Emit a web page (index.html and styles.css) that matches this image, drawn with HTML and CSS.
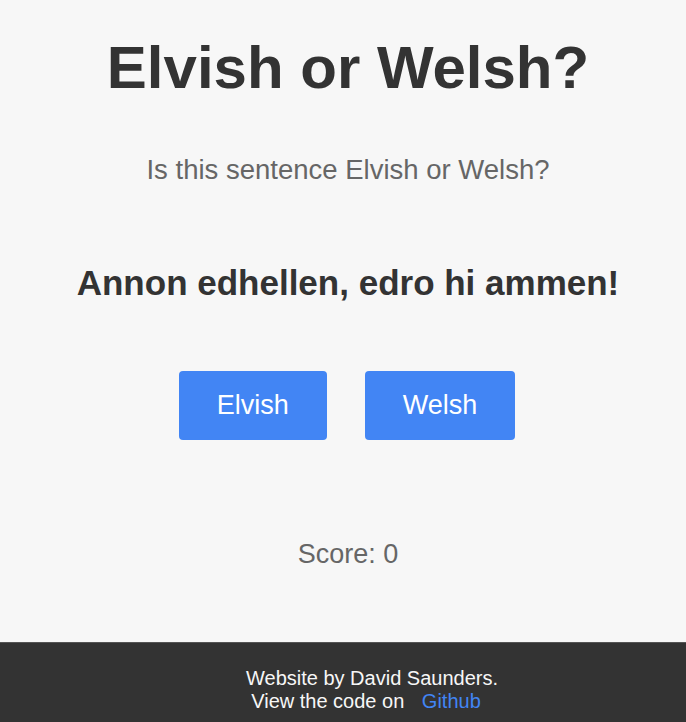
FILE: index.html
```html
<!DOCTYPE html>
<html lang="en">
<head>
<meta charset="utf-8">
<title>Elvish or Welsh?</title>
<link rel="stylesheet" href="styles.css">
</head>
<body>
<main class="game">
  <h1 class="title">Elvish or Welsh?</h1>
  <p class="question">Is this sentence Elvish or Welsh?</p>
  <p class="sentence">Annon edhellen, edro hi ammen!</p>
  <div class="choices">
    <button class="choice">Elvish</button>
    <button class="choice">Welsh</button>
  </div>
  <p class="score">Score: 0</p>
</main>
<footer class="footer">
  <div class="footer-text">Website by David Saunders.<br>View the code on <a class="footer-link" href="#">Github</a></div>
</footer>
</body>
</html>
```
FILE: styles.css
```css
html, body {
  margin: 0;
  padding: 0;
}
body {
  min-height: 100vh;
  display: flex;
  flex-direction: column;
  background: #f7f7f7;
  color: #333;
  font-family: "Liberation Sans", Arial, sans-serif;
}
.game {
  flex: 1;
  display: flex;
  flex-direction: column;
  align-items: center;
  text-align: center;
  padding-left: 10px;
}
.title {
  margin: 32px 0 0;
  font-size: 60px;
  line-height: 72px;
  font-weight: bold;
  color: #333;
}
.question {
  margin: 50px 0 0;
  font-size: 27.5px;
  line-height: 32px;
  color: #666;
}
.sentence {
  margin: 77px 0 0;
  font-size: 35px;
  line-height: 40px;
  font-weight: bold;
  color: #333;
}
.choices {
  margin-top: 68px;
  display: flex;
  gap: 38px;
  padding-right: 2px;
}
.choice {
  font-family: "Liberation Sans", Arial, sans-serif;
  font-size: 27px;
  line-height: 31px;
  padding: 19px 38px;
  border: none;
  border-radius: 4px;
  background: #4285f4;
  color: #fff;
}
.score {
  margin: 98px 0 0;
  font-size: 27px;
  line-height: 32px;
  color: #666;
}
.footer {
  background: #333;
  border-top: 1px solid #555;
  height: 80px;
  display: flex;
  justify-content: center;
  padding-left: 58px;
  box-sizing: border-box;
}
.footer-text {
  margin-top: 24px;
  color: #f7f7f7;
  font-size: 20px;
  line-height: 23px;
  text-align: center;
}
.footer-link {
  color: #4285f4;
  text-decoration: none;
  margin: 0 12px;
}
```
